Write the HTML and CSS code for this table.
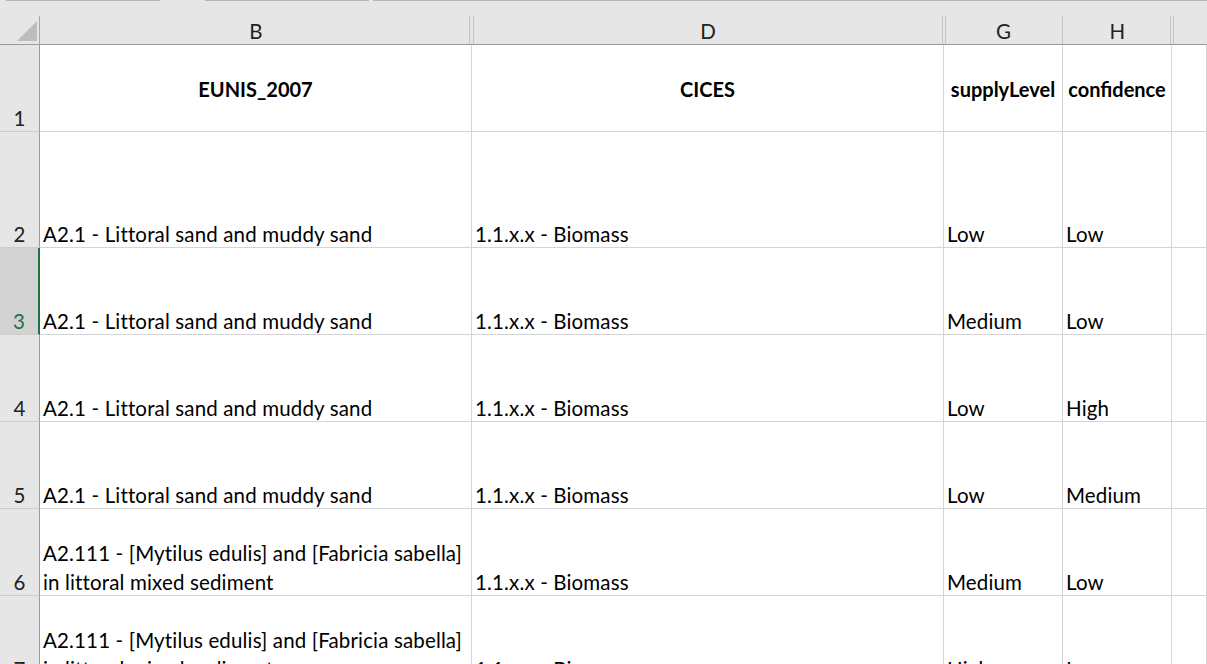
FILE: index.html
```html
<!DOCTYPE html>
<html>
<head>
<meta charset="utf-8">
<link rel="stylesheet" href="styles.css">
</head>
<body>
<div class="tabline"><span class="seg s1"></span><span class="gap g1"></span><span class="seg s2"></span><span class="gap g2"></span><span class="seg s3"></span></div>
<div class="colhdr">
  <div class="hc corner"><svg class="tri" width="22" height="22" viewBox="0 0 22 22"><polygon points="1,21 21,21 21,1" fill="#bdbdbd"/></svg></div>
  <div class="hc hb">B</div>
  <div class="hc hd">D</div>
  <div class="hc hg">G</div>
  <div class="hc hh">H</div>
  <div class="hc hr"></div>
</div>

<div class="row r1">
  <div class="rh"><span>1</span></div>
  <div class="c head">EUNIS_2007</div>
  <div class="c head">CICES</div>
  <div class="c head">supplyLevel</div>
  <div class="c head">confidence</div>
  <div class="c"></div>
</div>

<div class="row r2">
  <div class="rh"><span>2</span></div>
  <div class="c"><span>A2.1 - Littoral sand and muddy sand</span></div>
  <div class="c"><span>1.1.x.x - Biomass</span></div>
  <div class="c"><span>Low</span></div>
  <div class="c"><span>Low</span></div>
  <div class="c"></div>
</div>

<div class="row">
  <div class="rh sel"><span>3</span></div>
  <div class="c"><span>A2.1 - Littoral sand and muddy sand</span></div>
  <div class="c"><span>1.1.x.x - Biomass</span></div>
  <div class="c"><span>Medium</span></div>
  <div class="c"><span>Low</span></div>
  <div class="c"></div>
</div>

<div class="row">
  <div class="rh"><span>4</span></div>
  <div class="c"><span>A2.1 - Littoral sand and muddy sand</span></div>
  <div class="c"><span>1.1.x.x - Biomass</span></div>
  <div class="c"><span>Low</span></div>
  <div class="c"><span>High</span></div>
  <div class="c"></div>
</div>

<div class="row">
  <div class="rh"><span>5</span></div>
  <div class="c"><span>A2.1 - Littoral sand and muddy sand</span></div>
  <div class="c"><span>1.1.x.x - Biomass</span></div>
  <div class="c"><span>Low</span></div>
  <div class="c"><span>Medium</span></div>
  <div class="c"></div>
</div>

<div class="row">
  <div class="rh"><span>6</span></div>
  <div class="c"><span>A2.111 - [Mytilus edulis] and [Fabricia sabella]<br>in littoral mixed sediment</span></div>
  <div class="c"><span>1.1.x.x - Biomass</span></div>
  <div class="c"><span>Medium</span></div>
  <div class="c"><span>Low</span></div>
  <div class="c"></div>
</div>

<div class="row">
  <div class="rh"><span>7</span></div>
  <div class="c"><span>A2.111 - [Mytilus edulis] and [Fabricia sabella]<br>in littoral mixed sediment</span></div>
  <div class="c"><span>1.1.x.x - Biomass</span></div>
  <div class="c"><span>High</span></div>
  <div class="c"><span>Low</span></div>
  <div class="c"></div>
</div>
</body>
</html>
```

FILE: styles.css
```css
* { box-sizing: border-box; }
html, body {
  margin: 0;
  padding: 0;
  background: #ffffff;
  overflow: hidden;
  height: 664px;
}
body {
  font-family: Lato, "Liberation Sans", sans-serif;
  font-size: 20.5px;
  letter-spacing: 0.15px;
  color: #000;
}

.tabline {
  display: flex;
  height: 1px;
  background: #e6e6e6;
}
.tabline .seg { background: #b5b5b5; height: 1px; }
.tabline .s1 { margin-left: 6px; width: 154px; }
.tabline .g1 { width: 45px; }
.tabline .s2 { width: 164px; }
.tabline .g2 { width: 4px; }
.tabline .s3 { flex: 1; }

.colhdr {
  display: grid;
  grid-template-columns: 40px 432px 472px 119px 109px 1fr;
  height: 44px;
  background: #e6e6e6;
  border-bottom: 1px solid #9b9b9b;
}
.hc {
  display: flex;
  align-items: flex-end;
  justify-content: center;
  padding-bottom: 0;
  line-height: 25px;
  color: #222;
  background-repeat: no-repeat;
}
.corner {
  background-image: linear-gradient(#a8a8a8, #a8a8a8);
  background-size: 1px 28px;
  background-position: right bottom;
  justify-content: flex-end;
  align-items: flex-end;
  padding: 0 2px 2px 0;
}
.tri { display: block; }
.hb {
  background-image: linear-gradient(#c3c3c3, #c3c3c3);
  background-size: 1px 28px;
  background-position: 429px bottom;
}
.hd {
  background-image: linear-gradient(#c3c3c3, #c3c3c3), linear-gradient(#c3c3c3, #c3c3c3);
  background-size: 1px 28px, 1px 28px;
  background-position: 1px bottom, 470px bottom;
}
.hg {
  background-image: linear-gradient(#c3c3c3, #c3c3c3), linear-gradient(#c3c3c3, #c3c3c3);
  background-size: 1px 28px, 1px 28px;
  background-position: 1px bottom, right bottom;
}
.hh {
  background-image: linear-gradient(#c3c3c3, #c3c3c3);
  background-size: 1px 28px;
  background-position: 107px bottom;
}
.hr {
  background-image: linear-gradient(#c3c3c3, #c3c3c3);
  background-size: 1px 28px;
  background-position: 1px bottom;
}

.row {
  display: grid;
  grid-template-columns: 40px 432px 472px 119px 109px 1fr;
  height: 87px;
}
.row.r2 { height: 116px; }

.rh {
  background: #e6e6e6;
  border-right: 1px solid #9b9b9b;
  border-bottom: 1px solid #cdcdcd;
  display: flex;
  align-items: flex-end;
  justify-content: center;
  line-height: 29px;
  padding-bottom: 0;
  color: #222;
  overflow: hidden;
}
.rh span { margin-bottom: -2px; }
.rh.sel {
  background: #d2d2d2;
  color: #217346;
  border-right: 2px solid #217346;
}

.c {
  border-right: 1px solid #d4d4d4;
  border-bottom: 1px solid #d4d4d4;
  display: flex;
  align-items: flex-end;
  padding: 0 3px 0 3px;
  line-height: 29px;
  white-space: nowrap;
  overflow: hidden;
}
.c span { margin-bottom: -2px; }
.c.head {
  font-weight: bold;
  font-size: 20px;
  letter-spacing: 0;
  align-items: center;
  justify-content: center;
  padding: 2px 2px 0 2px;
}
```
